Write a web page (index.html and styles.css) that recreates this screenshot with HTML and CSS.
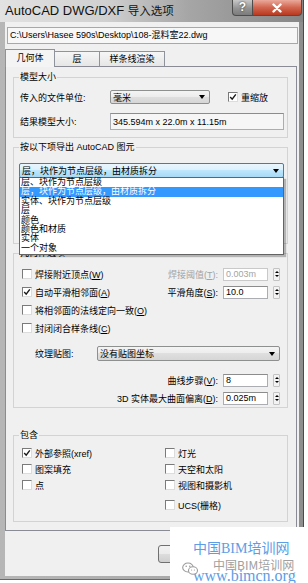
FILE: index.html
```html
<!DOCTYPE html>
<html lang="zh-CN">
<head>
<meta charset="utf-8">
<title>AutoCAD DWG/DXF 导入选项</title>
<link rel="stylesheet" href="styles.css">
</head>
<body>
<div class="window">
  <div class="titlebar">
    <div class="title">AutoCAD DWG/DXF <span class="cjk">导入选项</span></div>
    <div class="caps">
      <div class="cap help">?</div>
      <div class="cap close"><svg width="14" height="10" viewBox="0 0 14 10"><path d="M3.5 1.5 L10.5 8.5 M10.5 1.5 L3.5 8.5" stroke="#fff" stroke-width="2.4" stroke-linecap="round"/></svg></div>
    </div>
  </div>
  <div class="client">
    <div class="path">C:\Users\Hasee 590s\Desktop\108-混料室22.dwg</div>
    <div class="tabs">
      <div class="tab active">几何体</div>
      <div class="tab t2">层</div>
      <div class="tab t3">样条线渲染</div>
    </div>
    <div class="panel">
      <section class="grp g1">
        <div class="lg">模型大小</div>
        <div class="row unit-row">
          <span class="lbl-w">传入的文件单位:</span>
          <div class="combo c-unit"><span>毫米</span><span class="arrow"></span></div>
          <span class="chk on unit-chk"><svg width="8" height="8" viewBox="0 0 8 8"><path d="M1.2 4 L3.2 6.2 L6.8 1.4" fill="none" stroke="#1a1a1a" stroke-width="1.4"/></svg></span>
          <span class="chk-lbl">重缩放</span>
        </div>
        <div class="row size-row">
          <span class="lbl-w">结果模型大小:</span>
          <div class="field ro f-size">345.594m x 22.0m x 11.15m</div>
        </div>
      </section>

      <section class="grp g2">
        <div class="lg">按以下项导出 AutoCAD 图元</div>
        <div class="combo c-export">
          <span>层，块作为节点层级，由材质拆分</span><span class="arrow"></span>
          <div class="popup">
            <div class="opt">层、块作为节点层级</div>
            <div class="opt sel">层，块作为节点层级，由材质拆分</div>
            <div class="opt">实体、块作为节点层级</div>
            <div class="opt">层</div>
            <div class="opt">颜色</div>
            <div class="opt">颜色和材质</div>
            <div class="opt">实体</div>
            <div class="opt">一个对象</div>
          </div>
        </div>
      </section>

      <section class="grp g3">
        <div class="lg">几何体选项</div>
        <div class="cb-row first">
          <span class="chk"></span><span class="chk-lbl">焊接附近顶点(<u>W</u>)</span>
          <div class="rt">
            <span class="rt-lbl dis">焊接阈值(<u>T</u>):</span>
            <div class="field num dis">0.003m</div>
            <div class="spin"><i class="up"></i><i class="dn"></i></div>
          </div>
        </div>
        <div class="cb-row">
          <span class="chk on"><svg width="8" height="8" viewBox="0 0 8 8"><path d="M1.2 4 L3.2 6.2 L6.8 1.4" fill="none" stroke="#1a1a1a" stroke-width="1.4"/></svg></span><span class="chk-lbl">自动平滑相邻面(<u>A</u>)</span>
          <div class="rt">
            <span class="rt-lbl">平滑角度(<u>S</u>):</span>
            <div class="field num">10.0</div>
            <div class="spin"><i class="up"></i><i class="dn"></i></div>
          </div>
        </div>
        <div class="cb-row">
          <span class="chk"></span><span class="chk-lbl">将相邻面的法线定向一致(<u>O</u>)</span>
        </div>
        <div class="cb-row">
          <span class="chk"></span><span class="chk-lbl">封闭闭合样条线(<u>C</u>)</span>
        </div>
        <div class="tex-row">
          <span class="tex-lbl">纹理贴图:</span>
          <div class="combo c-tex"><span>没有贴图坐标</span><span class="arrow"></span></div>
        </div>
        <div class="num-row first">
          <span class="rt-lbl">曲线步骤(<u>V</u>):</span>
          <div class="field num">8</div>
          <div class="spin"><i class="up"></i><i class="dn"></i></div>
        </div>
        <div class="num-row">
          <span class="rt-lbl">3D 实体最大曲面偏离(<u>D</u>):</span>
          <div class="field num">0.025m</div>
          <div class="spin"><i class="up"></i><i class="dn"></i></div>
        </div>
      </section>

      <section class="grp g4">
        <div class="lg">包含</div>
        <div class="inc">
          <div class="item"><span class="chk on"><svg width="8" height="8" viewBox="0 0 8 8"><path d="M1.2 4 L3.2 6.2 L6.8 1.4" fill="none" stroke="#1a1a1a" stroke-width="1.4"/></svg></span><span class="chk-lbl">外部参照(xref)</span></div>
          <div class="item"><span class="chk"></span><span class="chk-lbl">灯光</span></div>
          <div class="item"><span class="chk"></span><span class="chk-lbl">图案填充</span></div>
          <div class="item"><span class="chk"></span><span class="chk-lbl">天空和太阳</span></div>
          <div class="item"><span class="chk"></span><span class="chk-lbl">点</span></div>
          <div class="item"><span class="chk"></span><span class="chk-lbl">视图和摄影机</span></div>
          <div class="item ucs"><span class="chk"></span><span class="chk-lbl">UCS(栅格)</span></div>
        </div>
      </section>
    </div>
    <div class="btns">
      <div class="btn">确定</div>
      <div class="btn">取消</div>
    </div>
  </div>
</div>

<div class="watermark">
  <div class="wm-t1">中国BIM培训网</div>
  <div class="wm-t3">www.bimcn.org</div>
  <svg class="wm-icon" width="17" height="14" viewBox="0 0 17 14"><ellipse cx="6" cy="5.5" rx="5.3" ry="4.5" fill="none" stroke="#9a9a9a" stroke-width="1.1"/><ellipse cx="11" cy="8.5" rx="4.5" ry="3.8" fill="#fff" stroke="#9a9a9a" stroke-width="1.1"/><circle cx="4.2" cy="4.3" r="0.8" fill="#9a9a9a"/><circle cx="7.8" cy="4.3" r="0.8" fill="#9a9a9a"/><circle cx="9.6" cy="8" r="0.6" fill="#9a9a9a"/><circle cx="12.4" cy="8" r="0.6" fill="#9a9a9a"/></svg>
  <div class="wm-t2">中国BIM培训网</div>
</div>
</body>
</html>
```

FILE: styles.css
```css
* { box-sizing: border-box; }
html, body { margin: 0; padding: 0; }
body {
  width: 308px;
  height: 583px;
  overflow: hidden;
  background: #fff;
  position: relative;
  font-family: "Liberation Sans", "Noto Sans CJK SC", sans-serif;
  font-size: 9px;
  color: #000;
}

.window {
  width: 304px;
  height: 580px;
  display: flex;
  flex-direction: column;
  background: linear-gradient(90deg, #b6b6b6 0%, #a9a9a9 60%, #8e8e8e 100%);
  border-right: 1px solid #4a4a4a;
  border-bottom: 1px solid #6a6a6a;
}

/* title bar */
.titlebar {
  flex: none;
  height: 22px;
  display: flex;
  align-items: flex-start;
  background: linear-gradient(90deg, #e2e2e2 0%, #d0d0d0 35%, #a6a6a6 62%, #868686 100%);
}
.title {
  padding: 3px 0 0 5px;
  font-size: 13px;
  line-height: 16px;
  color: #111;
  white-space: nowrap;
}
.title .cjk { font-size: 11.5px; }
.caps { margin-left: auto; margin-right: 1px; display: flex; }
.cap { height: 16px; border: 1px solid #4d4d4d; border-top: none; }
.help {
  width: 21px;
  border-radius: 0 0 0 4px;
  background: linear-gradient(#c8c8c8, #939393 55%, #7c7c7c);
  color: #fff;
  font: bold 12px/15px "Liberation Sans", sans-serif;
  text-align: center;
  text-shadow: 0 0 2px #222;
}
.close {
  width: 49px;
  border-left: none;
  border-radius: 0 0 4px 0;
  background: linear-gradient(#eaa99b, #d2654f 50%, #b9391f);
  display: flex;
  align-items: center;
  justify-content: center;
}

/* client */
.client {
  flex: 1;
  margin: 0 4px 3px 5px;
  background: #f0f0f0;
  display: flex;
  flex-direction: column;
  padding-top: 5px;
}
.path {
  flex: none;
  height: 17px;
  margin: 0 1px 0 2px;
  border: 1px solid #a8a8a8;
  background: #f7f7f7;
  padding-left: 2px;
  line-height: 15px;
  white-space: nowrap;
  overflow: hidden;
}

/* tabs */
.tabs {
  flex: none;
  display: flex;
  align-items: flex-end;
  height: 18px;
  margin-top: 5px;
  margin-bottom: -1px;
}
.tab {
  height: 15px;
  margin-bottom: 1px;
  border: 1px solid #8f939b;
  border-bottom: none;
  background: linear-gradient(#f6f6f6, #e6e6e6);
  text-align: center;
  line-height: 14px;
  white-space: nowrap;
}
.tab.active {
  position: relative;
  z-index: 1;
  width: 50px;
  height: 18px;
  margin-bottom: 0;
  background: #f4f4f4;
  line-height: 16px;
}
.tab.t2 { width: 46px; margin-left: -1px; }
.tab.t3 { width: 66px; margin-left: -1px; }

/* panel */
.panel {
  flex: none;
  height: 465px;
  margin-right: 2px;
  border: 1px solid #898c95;
  background: #f0f0f0;
  padding: 10px 8px 0 7px;
  display: flex;
  flex-direction: column;
}

.grp {
  flex: none;
  border: 1px solid #d3d3d3;
}
.lg {
  width: max-content;
  height: 12px;
  line-height: 12px;
  margin-top: -7px;
  padding: 0 1px;
  background: #f0f0f0;
  white-space: nowrap;
}

.g1 { padding: 0 2px 7px 6px; }
.g1 .lg { margin-left: -1px; }
.g2 { margin-top: 9px; padding: 0 3px 65px 5px; }
.g2 .lg { margin-left: 0; }
.g3 { margin-top: 9px; padding: 0 7px 0 8px; }
.g3 .lg { margin-left: -3px; }
.g4 { margin-top: 27px; padding: 0 7px 8px 8px; }
.g4 .lg { margin-left: -3px; }

.row { display: flex; align-items: center; }
.unit-row { margin-top: 7px; height: 14px; }
.size-row { margin-top: 9px; height: 17px; }
.lbl-w { width: 90px; white-space: nowrap; }

/* combos */
.combo {
  display: flex;
  align-items: center;
  border: 1px solid #8e8f8f;
  border-radius: 2px;
  background: linear-gradient(#f4f4f4, #ececec 50%, #dfdfdf 50%, #d6d6d6);
  padding-left: 2px;
  white-space: nowrap;
}
.arrow {
  margin-left: auto;
  margin-right: 4px;
  width: 0;
  height: 0;
  border-left: 3.5px solid transparent;
  border-right: 3.5px solid transparent;
  border-top: 4px solid #000;
}
.c-unit { width: 100px; height: 14px; }
.c-export {
  position: relative;
  margin-top: 10px;
  height: 15px;
  border-color: #3c7fb1;
  background: linear-gradient(#eaf6fd, #d9f0fc 50%, #bee6fd 50%, #a7d9f5);
}
.c-tex { width: 183px; height: 15px; }

.popup {
  position: absolute;
  left: -1px;
  top: 13px;
  width: 265px;
  height: 78px;
  background: #fff;
  border: 1px solid #646464;
  box-shadow: 2px 2px 1px rgba(0, 0, 0, 0.25);
  z-index: 5;
}
.opt {
  height: 9.4px;
  line-height: 9.4px;
  padding-left: 1px;
  white-space: nowrap;
}
.opt.sel { background: #3399ff; color: #fff; }

/* checkboxes */
.chk {
  flex: none;
  width: 10px;
  height: 10px;
  border: 1px solid;
  border-color: #7a7a7a #dcdcdc #dcdcdc #7a7a7a;
  background: #fff;
  display: flex;
  align-items: center;
  justify-content: center;
}
.chk-lbl { margin-left: 3px; white-space: nowrap; }
.unit-chk { margin-left: 18px; }

/* fields */
.field {
  display: flex;
  align-items: center;
  background: #fff;
  border: 1px solid #abadb3;
  border-top-color: #8c8c8c;
  padding-left: 2px;
  white-space: nowrap;
}
.field.ro { background: #f6f6f6; }
.f-size { width: 174px; height: 17px; }
.field.num { width: 45px; height: 13px; margin-left: 5px; }
.field.dis { color: #a3a3a3; border-color: #c9c9c9; }
.dis { color: #a3a3a3; }

.spin {
  flex: none;
  width: 7px;
  height: 13px;
  margin-left: 5px;
  border: 1px solid #c3c3c3;
  border-radius: 1px;
  background: #f3f3f3;
  display: flex;
  flex-direction: column;
  align-items: center;
  justify-content: space-evenly;
}
.spin i { display: block; width: 0; height: 0; border-left: 2px solid transparent; border-right: 2px solid transparent; }
.spin .up { border-bottom: 2.5px solid #000; }
.spin .dn { border-top: 2.5px solid #000; }

/* group 3 rows */
.cb-row { height: 18px; display: flex; align-items: center; }
.cb-row.first { margin-top: 6px; }
.rt { margin-left: auto; display: flex; align-items: center; }
.rt-lbl { white-space: nowrap; }
.tex-row { margin-top: 9px; height: 15px; display: flex; align-items: center; }
.tex-lbl { margin-left: 13px; width: 62px; white-space: nowrap; }
.num-row { height: 18px; display: flex; align-items: center; justify-content: flex-end; }
.num-row.first { margin-top: 10px; }

/* group 4 */
.inc {
  margin-top: 4px;
  display: grid;
  grid-template-columns: 143px 1fr;
  grid-template-rows: 16px 16px 16px 20px;
}
.item { display: flex; align-items: center; height: 16px; }
.item.ucs { grid-column: 2; align-self: end; }

/* buttons */
.btns {
  flex: none;
  display: flex;
  justify-content: flex-end;
  gap: 8px;
  margin-top: 14px;
  margin-right: 13px;
}
.btn {
  width: 60px;
  height: 18px;
  border: 1px solid #707070;
  border-radius: 3px;
  background: linear-gradient(#f2f2f2, #ebebeb 50%, #dddddd 50%, #cfcfcf);
  text-align: center;
  line-height: 16px;
}

/* watermark overlay */
.watermark {
  position: absolute;
  left: 170px;
  top: 527px;
  width: 138px;
  height: 56px;
  background: #fff;
}
.wm-t1 {
  position: absolute;
  left: 23px;
  top: 13px;
  font: 14px/18px "Liberation Serif", "Noto Sans CJK SC", serif;
  color: #5d9de6;
  white-space: nowrap;
}
.wm-t3 {
  position: absolute;
  left: 23px;
  top: 40px;
  font: 16px/17px "Liberation Serif", serif;
  color: #5d9de6;
  white-space: nowrap;
}
.wm-icon { position: absolute; left: 12px; top: 35px; }
.wm-t2 {
  position: absolute;
  left: 43px;
  top: 30px;
  font: 12px/15px "Noto Sans CJK SC", sans-serif;
  color: #a0a0a0;
  white-space: nowrap;
}
```
